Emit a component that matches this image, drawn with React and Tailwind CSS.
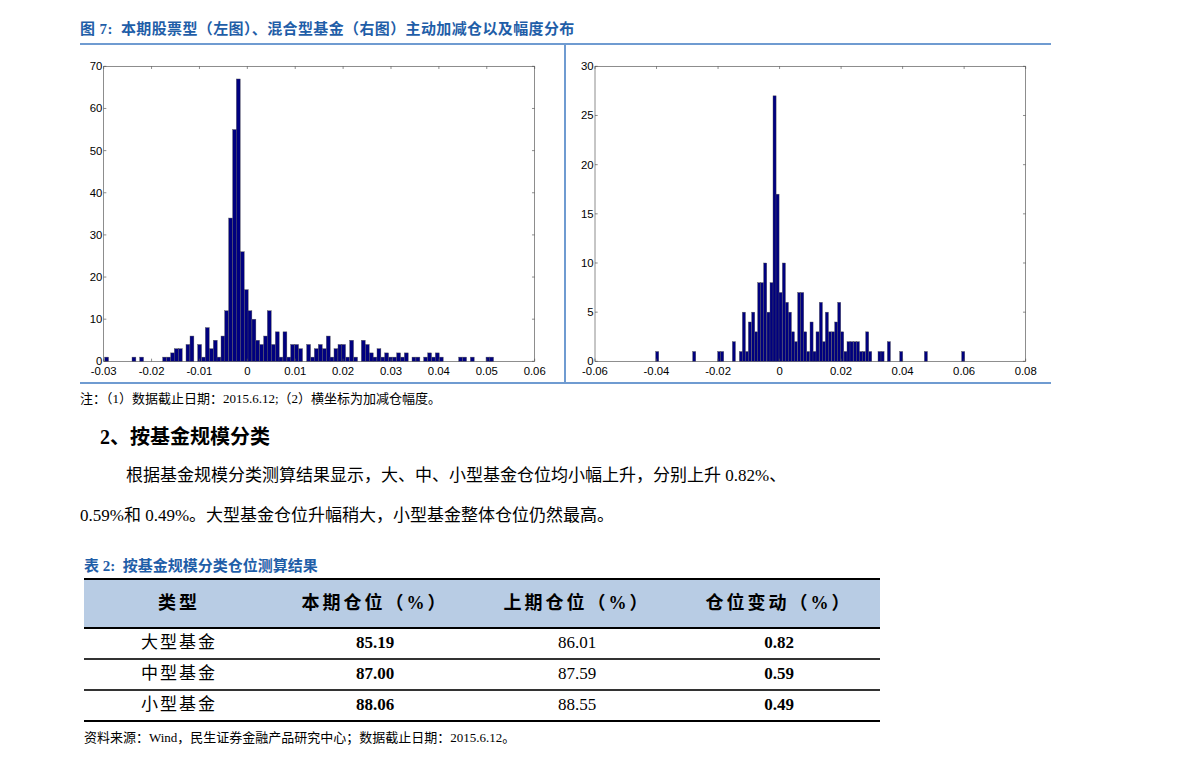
const F = { fontFamily: '"Liberation Serif", "Noto Sans CJK SC", serif' };

const leftBars = [[98,1],[180,1],[203,1],[272,1],[284,1],[296,2],[307,3],[319,3],[342,4],[354,6],[377,4],[389,1],[400,8],[412,3],[424,5],[435,1],[447,6],[458,12],[470,34],[482,55],[493,67],[505,26],[517,17],[528,12],[540,10],[551,5],[563,4],[575,6],[586,12],[598,4],[610,7],[621,1],[633,7],[645,1],[656,4],[668,4],[680,3],[704,4],[716,1],[727,3],[739,4],[751,3],[763,6],[774,1],[786,3],[798,4],[809,4],[821,1],[833,5],[845,1],[868,5],[880,4],[892,2],[903,1],[915,3],[927,1],[938,2],[950,1],[962,1],[974,2],[985,1],[997,2],[1020,1],[1032,1],[1055,1],[1067,2],[1079,1],[1090,2],[1102,1],[1160,1],[1172,1],[1195,1],[1242,1],[1253,1]];
const rightBars = [[290,1],[401,1],[476,1],[485,1],[520,2],[541,1],[550,5],[559,1],[568,4],[578,5],[587,3],[596,8],[605,8],[614,10],[624,5],[633,8],[642,27],[651,17],[660,7],[670,10],[679,6],[688,5],[697,3],[706,2],[716,7],[725,7],[734,3],[743,1],[753,4],[762,1],[771,3],[781,6],[790,2],[799,5],[808,3],[818,3],[827,4],[836,6],[845,3],[855,1],[864,2],[873,2],[883,2],[892,2],[901,1],[910,1],[920,3],[929,1],[957,1],[966,1],[985,2],[1022,1],[1096,1],[1208,1]];

function Chart({ w, x0, x1, y0, y1, ymax, xTicks, yTicks, bars, bw }) {
  const sy = (y1 - y0) / ymax;
  const fs = { fontFamily: '"Liberation Sans", Arial, sans-serif', fontSize: 34 };
  return (
    <svg viewBox={`0 0 ${w} 1000`} className="block" style={{ width: w / 3, height: 1000 / 3 }}>
      <rect x={x0} y={y0} width={x1 - x0} height={y1 - y0} fill="white" stroke="#555" strokeWidth="2" />
      {bars.map(([x, h], i) => (
        <rect key={i} x={x} y={y1 - h * sy} width={bw} height={h * sy} fill="#00007f" stroke="#555" strokeWidth="1.2" />
      ))}
      {yTicks.map((t, i) => {
        const y = y1 - t * sy;
        return (
          <g key={i}>
            <line x1={x0} x2={x0 + 8} y1={y} y2={y} stroke="#555" strokeWidth="2" />
            <line x1={x1} x2={x1 - 8} y1={y} y2={y} stroke="#555" strokeWidth="2" />
            <text x={x0 - 4} y={y + 12} textAnchor="end" style={fs}>{t}</text>
          </g>
        );
      })}
      {xTicks.map((t, i) => {
        const x = x0 + (i * (x1 - x0)) / (xTicks.length - 1);
        return (
          <g key={i}>
            <line x1={x} x2={x} y1={y1} y2={y1 - 8} stroke="#555" strokeWidth="2" />
            <line x1={x} x2={x} y1={y0} y2={y0 + 8} stroke="#555" strokeWidth="2" />
            <text x={x} y={y1 + 40} textAnchor="middle" style={fs}>{t}</text>
          </g>
        );
      })}
    </svg>
  );
}

const rows = [
  ["大型基金", "85.19", "86.01", "0.82"],
  ["中型基金", "87.00", "87.59", "0.59"],
  ["小型基金", "88.06", "88.55", "0.49"],
];

export default function App() {
  return (
    <div className="w-[1191px] h-[759px] bg-white pl-[80px] pt-[18px] text-black" style={F}>
      <div className="w-[971px] border-b-2 border-[#6f9bd1] pb-[2px] text-[15px] font-bold text-[#1f5ea8] tracking-wide">
        图 7:&nbsp; 本期股票型（左图）、混合型基金（右图）主动加减仓以及幅度分布
      </div>
      <div className="w-[971px] h-[339px] flex border-b-2 border-[#6f9bd1]">
        <div className="w-[486px] border-r-2 border-[#6f9bd1] pt-[4px] overflow-hidden">
          <div className="-ml-[8px]">
            <Chart w={1440} x0={95} x1={1388} y0={52} y1={937} ymax={70} xTicks={["-0.03","-0.02","-0.01","0","0.01","0.02","0.03","0.04","0.05","0.06"]} yTicks={[0,10,20,30,40,50,60,70]} bars={leftBars} bw={11.65} />
          </div>
        </div>
        <div className="pt-[4px]">
          <Chart w={1455} x0={87} x1={1379} y0={52} y1={937} ymax={30} xTicks={["-0.06","-0.04","-0.02","0","0.02","0.04","0.06","0.08"]} yTicks={[0,5,10,15,20,25,30]} bars={rightBars.map(([x, h]) => [x - 21, h])} bw={9.3} />
        </div>
      </div>
      <div className="text-[13px] mt-[6px] leading-[18px]">注：（1）数据截止日期：2015.6.12;（2）横坐标为加减仓幅度。</div>
      <div className="text-[20px] font-bold mt-[16px] ml-[20px] leading-[26px]">2、按基金规模分类</div>
      <div className="text-[17px] leading-[40px] mt-[6px] w-[860px]">
        <div className="pl-[46px]">根据基金规模分类测算结果显示，大、中、小型基金仓位均小幅上升，分别上升 0.82%、</div>
        <div>0.59%和 0.49%。大型基金仓位升幅稍大，小型基金整体仓位仍然最高。</div>
      </div>
      <div className="text-[15px] font-bold text-[#1f5ea8] mt-[20px] ml-[4px] leading-[20px]">表 2:&nbsp; 按基金规模分类仓位测算结果</div>
      <table className="w-[796px] ml-[4px] mt-[2px] border-collapse border-t-2 border-b-2 border-black text-[17px]">
        <thead>
          <tr className="bg-[#b8cce4] h-[49px] border-b-2 border-black">
            {["类型", "本期仓位（%）", "上期仓位（%）", "仓位变动（%）"].map((h, i) => (
              <th key={i} className={`font-bold text-[18px] tracking-[3px] ${i === 0 ? "w-[190px]" : "w-[202px]"}`}>{h}</th>
            ))}
          </tr>
        </thead>
        <tbody>
          {rows.map((r, i) => (
            <tr key={i} className={`h-[31px] text-center ${i < 2 ? "border-b-2 border-[#333]" : ""}`}>
              <td className="tracking-[2px]">{r[0]}</td>
              <td className="font-bold">{r[1]}</td>
              <td>{r[2]}</td>
              <td className="font-bold">{r[3]}</td>
            </tr>
          ))}
        </tbody>
      </table>
      <div className="text-[13px] mt-[6px] ml-[4px]">资料来源：Wind，民生证券金融产品研究中心；数据截止日期：2015.6.12。</div>
    </div>
  );
}
